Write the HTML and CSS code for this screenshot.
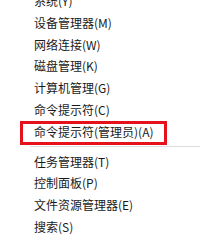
FILE: index.html
```html
<!DOCTYPE html>
<html lang="zh-CN">
<head>
<meta charset="utf-8">
<link rel="stylesheet" href="styles.css">
</head>
<body>
<div class="menu">
  <div class="group">
    <div class="item">系统(Y)</div>
    <div class="item">设备管理器(M)</div>
    <div class="item">网络连接(W)</div>
    <div class="item">磁盘管理(K)</div>
    <div class="item">计算机管理(G)</div>
    <div class="item">命令提示符(C)</div>
    <div class="item marked">命令提示符(管理员)(A)</div>
  </div>
  <div class="sep"></div>
  <div class="group">
    <div class="item">任务管理器(T)</div>
    <div class="item">控制面板(P)</div>
    <div class="item">文件资源管理器(E)</div>
    <div class="item">搜索(S)</div>
  </div>
</div>
</body>
</html>
```
FILE: styles.css
```css
html, body {
  margin: 0;
  padding: 0;
  background: #ffffff;
  overflow: hidden;
}
.menu {
  width: 200px;
  height: 234px;
  overflow: hidden;
  font-family: "Noto Sans CJK SC", "Microsoft YaHei", sans-serif;
  font-size: 12px;
  color: #1a1a1a;
}
.group {
  display: flex;
  flex-direction: column;
}
.group:first-child {
  margin-top: -10px;
}
.item {
  height: 21.8px;
  line-height: 21.8px;
  padding-left: 34px;
  white-space: nowrap;
  position: relative;
}
.marked::after {
  content: "";
  position: absolute;
  left: 20px;
  top: 0;
  width: 147px;
  height: 24px;
  border: 3px solid #e5121b;
  box-sizing: border-box;
}
.sep {
  height: 8px;
  margin-left: 30px;
  display: flex;
  align-items: center;
}
.sep::before {
  content: "";
  display: block;
  width: 100%;
  height: 1px;
  background: #dcdcdc;
}
```
